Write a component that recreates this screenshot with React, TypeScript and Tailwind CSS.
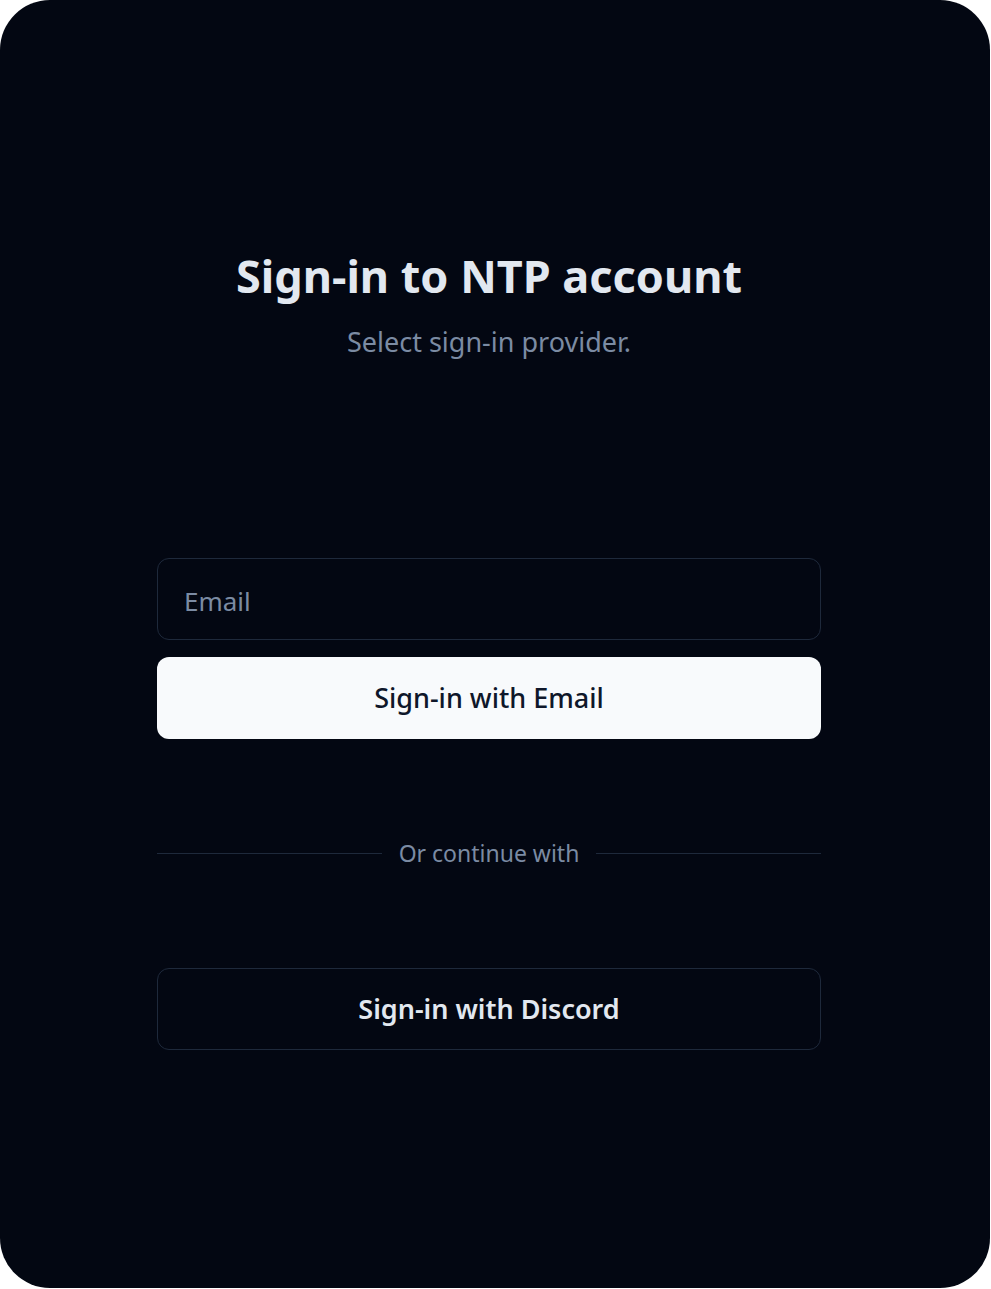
export default function App() {
  return (
    <div className="min-h-screen bg-white font-['Noto_Sans',sans-serif]">
      <div className="flex h-[1288px] w-[990px] flex-col items-center rounded-[50px] bg-[#030712] pl-[157px] pr-[169px] pt-[246px]">
        <h1 className="text-[45px] font-bold leading-[60px] text-[#e2e8f0]">Sign-in to NTP account</h1>
        <p className="mt-[19px] text-[27px] leading-[34px] text-[#7b8ba3]">Select sign-in provider.</p>

        <div className="mt-[199px] flex w-full flex-col gap-[17px]">
          <input
            placeholder="Email"
            className="h-[82px] w-full rounded-[12px] border border-[#1e293b] bg-transparent px-[26px] pt-[3px] text-[26px] text-[#e2e8f0] placeholder:text-[#7b8ba3] outline-none"
          />
          <button className="h-[82px] w-full rounded-[12px] bg-[#f8fafc] text-[27px] font-medium text-[#0f172a]">
            Sign-in with Email
          </button>
        </div>

        <div className="mt-[98px] flex w-full items-center gap-[17px]">
          <div className="h-px flex-1 bg-[#1e293b]" />
          <span className="text-[23px] leading-[32px] text-[#7b8ba3]">Or continue with</span>
          <div className="h-px flex-1 bg-[#1e293b]" />
        </div>

        <button className="mt-[99px] h-[82px] w-full rounded-[12px] border border-[#1e293b] text-[27px] font-semibold text-[#e2e8f0]">
          Sign-in with Discord
        </button>
      </div>
    </div>
  );
}
